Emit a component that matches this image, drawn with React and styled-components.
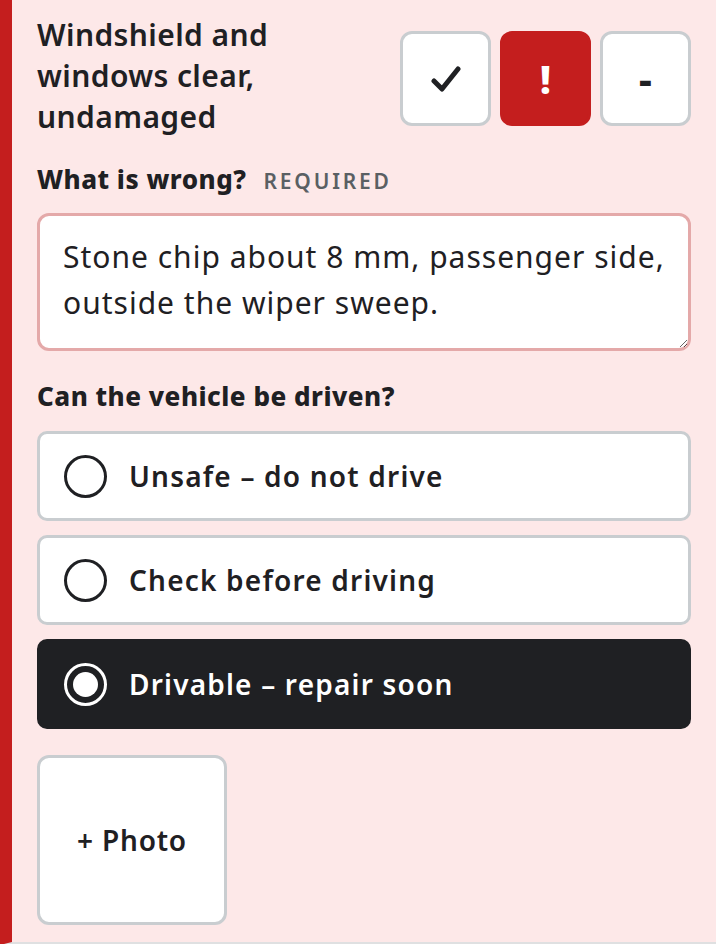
import React, { useState } from "react";
import styled, { createGlobalStyle, css } from "styled-components";

const Global = createGlobalStyle`
  html, body { margin: 0; padding: 0; background: #fde8e8; }
  body { font-family: "Noto Sans", "Open Sans", sans-serif; color: #1f2023; }
  * { box-sizing: border-box; }
`;

const Card = styled.section`
  display: flex;
  flex-direction: column;
  min-height: 944px;
  background: #fde8e8;
  border-left: 12px solid #c41e1e;
  border-bottom: 3px solid #dfe0e1;
  padding: 14px 25px 17px 25px;
`;

const Header = styled.div`
  display: flex;
  align-items: center;
  justify-content: space-between;
  gap: 16px;
`;

const Title = styled.h2`
  margin: 0;
  font-size: 30px;
  line-height: 41px;
  font-weight: 600;
  letter-spacing: 0.4px;
  max-width: 300px;
`;

const Verdicts = styled.div`
  display: flex;
  gap: 9px;
  margin-top: 6px;
`;

const Verdict = styled.button`
  width: 91px;
  height: 95px;
  border-radius: 12px;
  border: 3px solid #c9cdd0;
  background: #fff;
  color: #1f2023;
  display: flex;
  align-items: center;
  justify-content: center;
  padding: 0;
  font-family: inherit;
  font-size: 40px;
  font-weight: 800;
  ${(p) =>
    p.$active &&
    css`
      background: #c41e1e;
      border-color: #c41e1e;
      color: #fff;
    `}
`;

const Label = styled.div`
  display: flex;
  align-items: baseline;
  gap: 17px;
  font-size: 26px;
  line-height: 32px;
  font-weight: 800;
  letter-spacing: 0.5px;
  margin-top: ${(p) => p.$top}px;
`;

const Required = styled.span`
  font-size: 21px;
  font-weight: 600;
  letter-spacing: 2.8px;
  color: #5a5f63;
`;

const Notes = styled.textarea`
  display: block;
  width: 100%;
  height: 138px;
  margin-top: 16px;
  border: 3px solid #e4a9a9;
  border-radius: 12px;
  background: #fff;
  padding: 18px 20px 16px 23px;
  font-family: inherit;
  font-size: 30px;
  line-height: 46px;
  font-weight: 400;
  letter-spacing: 1px;
  color: #1f2023;
  resize: vertical;
  outline: none;
`;

const Options = styled.div`
  display: flex;
  flex-direction: column;
  gap: 14px;
  margin-top: 19px;
`;

const Option = styled.button`
  display: flex;
  align-items: center;
  gap: 22px;
  height: 90px;
  width: 100%;
  padding: 0 24px;
  border-radius: 10px;
  border: 3px solid ${(p) => (p.$selected ? "#1f2023" : "#c9cdd0")};
  background: ${(p) => (p.$selected ? "#1f2023" : "#fff")};
  color: ${(p) => (p.$selected ? "#fff" : "#1f2023")};
  font-family: inherit;
  font-size: 28px;
  font-weight: 600;
  letter-spacing: 1.2px;
  text-align: left;
`;

const Radio = styled.span`
  flex: none;
  width: 43px;
  height: 43px;
  border-radius: 50%;
  border: 3px solid currentColor;
  display: flex;
  align-items: center;
  justify-content: center;
  &::after {
    content: "";
    width: 25px;
    height: 25px;
    border-radius: 50%;
    background: currentColor;
    display: ${(p) => (p.$on ? "block" : "none")};
  }
`;

const PhotoButton = styled.button`
  margin-top: 26px;
  width: 190px;
  height: 170px;
  border-radius: 12px;
  border: 3px solid #c9cdd0;
  background: #fff;
  color: #1f2023;
  font-family: inherit;
  font-size: 28px;
  font-weight: 600;
  letter-spacing: 0.8px;
`;

const Check = () => (
  <svg width="30" height="28" viewBox="0 0 30 28" fill="none">
    <path d="M3 16 L11 24 L27 4" stroke="currentColor" strokeWidth="5" strokeLinecap="round" strokeLinejoin="round" />
  </svg>
);

const choices = ["Unsafe – do not drive", "Check before driving", "Drivable – repair soon"];

export default function App() {
  const [choice, setChoice] = useState(2);
  return (
    <>
      <Global />
      <Card>
        <Header>
          <Title>Windshield and windows clear, undamaged</Title>
          <Verdicts>
            <Verdict aria-label="Pass">
              <Check />
            </Verdict>
            <Verdict $active aria-label="Fail">!</Verdict>
            <Verdict aria-label="Not applicable">-</Verdict>
          </Verdicts>
        </Header>
        <Label $top={26}>
          What is wrong?<Required>REQUIRED</Required>
        </Label>
        <Notes defaultValue="Stone chip about 8 mm, passenger side, outside the wiper sweep." />
        <Label $top={29}>Can the vehicle be driven?</Label>
        <Options>
          {choices.map((c, i) => (
            <Option key={c} $selected={choice === i} onClick={() => setChoice(i)}>
              <Radio $on={choice === i} />
              {c}
            </Option>
          ))}
        </Options>
        <PhotoButton>+ Photo</PhotoButton>
      </Card>
    </>
  );
}
